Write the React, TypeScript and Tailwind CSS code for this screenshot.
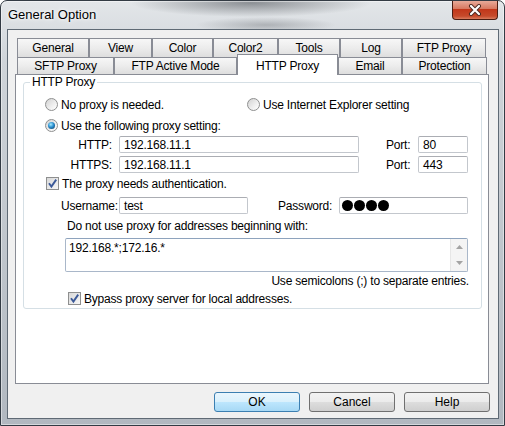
import React from 'react';

const tabBase = "h-full border border-b-0 border-[#898c95] bg-[linear-gradient(#f7f7f7,#ececec_50%,#dedede)] flex items-center justify-center";
const field = "h-full bg-white border border-[#c3c7cd] border-t-[#abadb3] rounded-[2px] flex items-center";

function Tab({ label, w }: { label: string; w: string }) {
    return <div className={`${w} ${tabBase}`}>{label}</div>;
}

function Radio({ checked }: { checked?: boolean }) {
    return (
        <span className="w-[13px] h-[13px] shrink-0 rounded-full border border-[#8e8f8f] bg-[linear-gradient(135deg,#d2d2d2,#f2f2f2_65%,#ffffff)] flex items-center justify-center">
            {checked && <span className="w-[7px] h-[7px] rounded-full bg-[radial-gradient(circle_at_40%_35%,#a8ecff_0%,#2a8fd0_45%,#0a3152_100%)]" />}
        </span>
    );
}

function Check() {
    return (
        <span className="w-[13px] h-[13px] shrink-0 border border-[#8e8f8f] bg-[linear-gradient(135deg,#d8d8d8,#f7f7f7)] flex items-center justify-center">
            <svg width="11" height="11" viewBox="0 0 11 11">
                <path d="M2 5.3 L4.4 8.6 L9.2 1.6" fill="none" stroke="#3b5998" strokeWidth="1.9" />
            </svg>
        </span>
    );
}

function Button({ label, primary }: { label: string; primary?: boolean }) {
    return (
        <div
            className={`w-[86px] h-[20px] rounded-[3px] border flex items-center justify-center ${
                primary
                    ? "border-[#3c7fb1] bg-[linear-gradient(#eaf6fd,#d9f0fc_50%,#bee6fd_50%,#a7d9f5)]"
                    : "border-[#707070] bg-[linear-gradient(#f2f2f2,#ebebeb_50%,#dddddd_50%,#cfcfcf)]"
            }`}
        >
            {label}
        </div>
    );
}

export default function App() {
    return (
        <div className="w-[505px] h-[426px] overflow-hidden rounded-t-[7px] border border-[#333b44] shadow-[inset_0_0_0_1px_rgba(255,255,255,0.45)] bg-[radial-gradient(ellipse_120px_14px_at_250px_2px,rgba(55,60,66,0.5),transparent),radial-gradient(ellipse_70px_8px_at_265px_24px,rgba(70,74,80,0.3),transparent),linear-gradient(#e3e6e9,#cfd4d9_60px,#b1b8c0)] font-['Liberation_Sans',Arial,sans-serif] text-[12px] text-black tracking-[-0.2px]">
            {/* title bar */}
            <div className="h-[28px] flex items-center">
                <span className="pl-[7px] text-[13px] tracking-normal [text-shadow:0_0_6px_#fff,0_0_3px_#fff]">General Option</span>
                <div className="self-start -mt-px ml-auto mr-[6px] w-[46px] h-[20px] rounded-b-[4px] border border-t-0 border-[#4a1d12] bg-[linear-gradient(#eab0a0,#d87a62_45%,#c2371a_50%,#c64a2b_85%,#da7c5e)] flex items-center justify-center">
                    <svg width="14" height="12" viewBox="0 0 14 12">
                        <path d="M3 2 L11 10 M11 2 L3 10" stroke="#4b2a22" strokeWidth="4" strokeLinecap="round" />
                        <path d="M3 2 L11 10 M11 2 L3 10" stroke="#ffffff" strokeWidth="2.2" strokeLinecap="round" />
                    </svg>
                </div>
            </div>

            {/* client area */}
            <div className="ml-[6px] w-[492px] h-[390px] border border-[#5f6a75] bg-[#f0f0f0] pt-[8px]">
                {/* tab row 1 */}
                <div className="ml-[9px] h-[19px] flex">
                    <Tab label="General" w="w-[72px]" />
                    <Tab label="View" w="w-[63px]" />
                    <Tab label="Color" w="w-[61px]" />
                    <Tab label="Color2" w="w-[65px]" />
                    <Tab label="Tools" w="w-[62px]" />
                    <Tab label="Log" w="w-[62px]" />
                    <Tab label="FTP Proxy" w="w-[84px]" />
                </div>
                {/* tab row 2 */}
                <div className="ml-[9px] h-[17px] flex items-end">
                    <Tab label="SFTP Proxy" w="w-[97px]" />
                    <Tab label="FTP Active Mode" w="w-[123px]" />
                    <div className="w-[101px] h-[21px] -mb-px relative z-10 bg-white border border-b-0 border-[#898c95] flex justify-center pt-[2px]">
                        HTTP Proxy
                    </div>
                    <Tab label="Email" w="w-[64px]" />
                    <Tab label="Protection" w="w-[85px]" />
                </div>

                {/* tab panel */}
                <div className="ml-[7px] w-[474px] h-[310px] border border-[#898c95] bg-white pt-[7px] pl-[7px]">
                    <div className="relative w-[459px] h-[227px] rounded-[3px] border border-[#d5dfe5]">
                        <span className="absolute left-[6px] -top-[8px] px-[2px] bg-white leading-[14px]">HTTP Proxy</span>

                        <div className="mt-[15px] h-[13px] pl-[21px] flex items-center">
                            <div className="w-[202px] flex items-center">
                                <Radio />
                                <span className="ml-[3px]">No proxy is needed.</span>
                            </div>
                            <Radio />
                            <span className="ml-[3px]">Use Internet Explorer setting</span>
                        </div>

                        <div className="mt-[8px] h-[13px] pl-[21px] flex items-center">
                            <Radio checked />
                            <span className="ml-[3px]">Use the following proxy setting:</span>
                        </div>

                        <div className="mt-[4px] h-[17px] pl-[21px] flex items-center">
                            <span className="w-[67px] text-right">HTTP:</span>
                            <div className={`ml-[7px] w-[240px] pl-[4px] ${field}`}>192.168.11.1</div>
                            <span className="ml-[27px] w-[32px]">Port:</span>
                            <div className={`w-[50px] pl-[4px] ${field}`}>80</div>
                        </div>

                        <div className="mt-[3px] h-[17px] pl-[21px] flex items-center">
                            <span className="w-[67px] text-right">HTTPS:</span>
                            <div className={`ml-[7px] w-[240px] pl-[4px] ${field}`}>192.168.11.1</div>
                            <span className="ml-[27px] w-[32px]">Port:</span>
                            <div className={`w-[50px] pl-[4px] ${field}`}>443</div>
                        </div>

                        <div className="mt-[4px] h-[13px] pl-[22px] flex items-center">
                            <Check />
                            <span className="ml-[3px]">The proxy needs authentication.</span>
                        </div>

                        <div className="mt-[7px] h-[17px] pl-[37px] flex items-center">
                            <span className="w-[58px]">Username:</span>
                            <div className={`w-[129px] pl-[4px] ${field}`}>test</div>
                            <span className="ml-[30px] w-[61px]">Password:</span>
                            <div className={`w-[129px] pl-[2px] gap-[1px] ${field}`}>
                                <span className="w-[11px] h-[11px] rounded-full bg-black" />
                                <span className="w-[11px] h-[11px] rounded-full bg-black" />
                                <span className="w-[11px] h-[11px] rounded-full bg-black" />
                                <span className="w-[11px] h-[11px] rounded-full bg-black" />
                            </div>
                        </div>

                        <div className="mt-[5px] h-[14px] pl-[43px] leading-[14px]">
                            Do not use proxy for addresses beginning with:
                        </div>

                        <div className="mt-[5px] ml-[41px] w-[403px] h-[34px] flex bg-white border border-[#a9b7c9] border-t-[#8ea3bd] rounded-[2px]">
                            <div className="flex-1 pl-[3px] pt-[2px] leading-[14px]">192.168.*;172.16.*</div>
                            <div className="w-[17px] h-full bg-[#f4f4f4] border-l border-[#e6e6e6] flex flex-col items-center justify-between py-[6px]">
                                <svg width="7" height="4" viewBox="0 0 7 4"><path d="M0 4 L3.5 0 L7 4 Z" fill="#a3a3a3" /></svg>
                                <svg width="7" height="4" viewBox="0 0 7 4"><path d="M0 0 L3.5 4 L7 0 Z" fill="#a3a3a3" /></svg>
                            </div>
                        </div>

                        <div className="mt-[2px] h-[14px] pr-[12px] text-right leading-[14px]">
                            Use semicolons (;) to separate entries.
                        </div>

                        <div className="mt-[4px] h-[13px] pl-[44px] flex items-center">
                            <Check />
                            <span className="ml-[3px]">Bypass proxy server for local addresses.</span>
                        </div>
                    </div>
                </div>

                {/* buttons */}
                <div className="mt-[8px] pr-[8px] flex justify-end gap-[9px] tracking-normal">
                    <Button label="OK" primary />
                    <Button label="Cancel" />
                    <Button label="Help" />
                </div>
            </div>
        </div>
    );
}
